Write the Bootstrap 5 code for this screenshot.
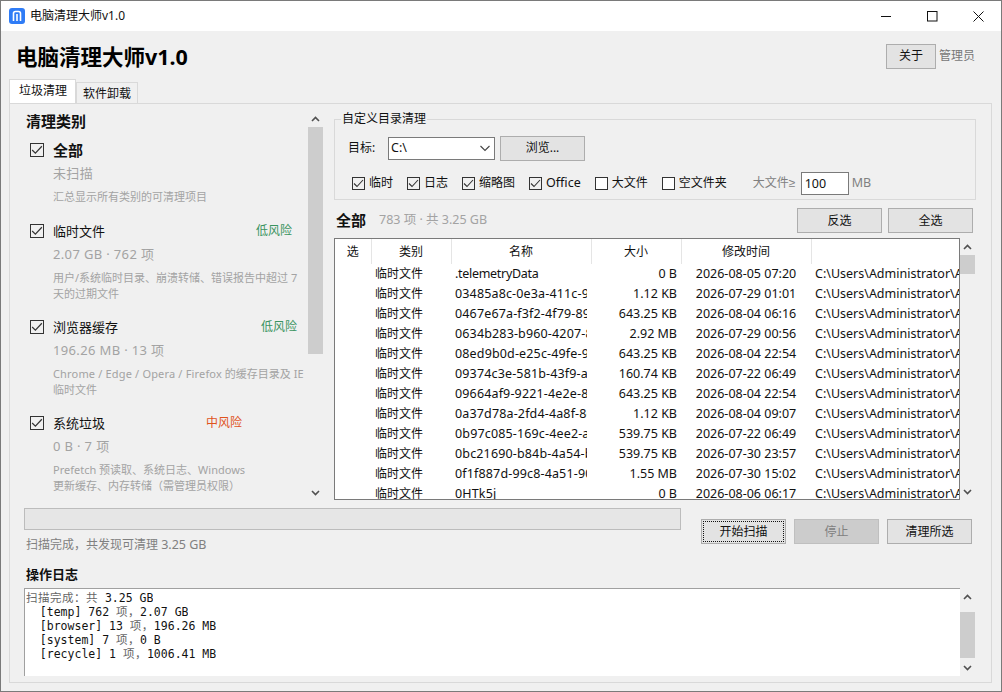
<!DOCTYPE html>
<html lang="zh-CN">
<head>
    <meta charset="UTF-8">
    <title>电脑清理大师v1.0</title>
    <link href="https://cdn.jsdelivr.net/npm/bootstrap@5.3.0/dist/css/bootstrap.min.css" rel="stylesheet">
    <style>
        html, body { margin: 0; height: 100%; overflow: hidden; background: #f0f0f0; }
        body, button, input, select, table { font-family: "Noto Sans", "Noto Sans CJK SC", sans-serif; font-size: 12px; color: #111; }

        .app-window { width: 1002px; height: 692px; border: 1px solid #7a7a7a; background: #f0f0f0; overflow: hidden; }
        .title-strip { height: 30px; background: #fff; padding-left: 8px; }
        .title-icon { margin-right: 5px; }
        .win-btn { width: 46px; height: 30px; }
        .head-strip { height: 49px; padding: 0 15px; }
        .app-heading { font-size: 21.5px; font-weight: 700; line-height: 1; margin: 2px 0 0; color: #000; }
        .admin-note { color: #777; margin: 0 11px 0 3px; line-height: 25px; }

        .win-btn-plain { border: 1px solid #adadad; border-radius: 0; background: #e3e3e3; color: #111; font-size: 12px; height: 25px; width: 85px; padding: 0; line-height: 1; }
        .win-btn-plain:hover { background: #e3e3e3; border-color: #adadad; color: #111; }
        .win-btn-about { width: 50px; margin-top: 1px; }
        .win-btn-focus { outline: 1px dotted #111; outline-offset: -3px; }
        .btn.win-btn-off, .btn.win-btn-off:disabled { background: #ccc; border-color: #bfbfbf; color: #808080; opacity: 1; }

        .tab-strip { padding-left: 8px; height: 23px; border: 0; }
        .tab-strip .nav-link { border: 1px solid #d9d9d9; border-bottom: 0; border-radius: 0; color: #111; font-size: 12px; height: 21px; margin-top: 2px; padding: 0 6px; line-height: 22px; background: #f0f0f0; margin-right: 0; }
        .tab-strip .nav-link.active { height: 24px; margin-top: -1px; background: #fff; color: #111; border-color: #d9d9d9; padding: 0 8px 0 9px; line-height: 22px; position: relative; z-index: 1; }
        .tab-body { margin-left: 8px; width: 983px; height: 580px; border: 1px solid #d9d9d9; }

        .top-zone { height: 397px; }
        .cat-panel { width: 314px; margin-top: 6px; height: 391px; }
        .cat-list { width: 298px; padding: 1px 0 0 16px; overflow: hidden; }
        .cat-title { font-size: 15px; font-weight: 700; line-height: 20px; color: #111; margin-bottom: 9px; }
        .cat-item { padding-left: 4px; margin-bottom: 15px; }
        .cat-item-first { margin-bottom: 16px; }
        .cat-head { height: 20px; line-height: 20px; font-size: 13px; }
        .cat-name { margin-left: 9px; }
        .cat-name-strong { font-weight: 700; font-size: 15px; }
        .cat-stat { color: #a3a3a3; font-size: 13px; line-height: 20px; margin: 3px 0 0 23px; letter-spacing: .35px; }
        .cat-desc { color: #a3a3a3; font-size: 11px; line-height: 16px; margin: 6px 0 0 23px; }
        .latin-wide { letter-spacing: .17px; }
        .risk-low { color: #3a9460; font-size: 12px; }
        .risk-mid { color: #e0531c; font-size: 12px; }
        .risk-a { margin-left: 151px; }
        .risk-b { margin-left: 143px; }
        .risk-c { margin-left: 101px; }

        .win-scroll { width: 15px; flex: none; background: #f0f0f0; }
        .scroll-arrow { height: 17px; display: flex; align-items: center; justify-content: center; flex: none; }
        .scroll-thumb { width: 15px; background: #cdcdcd; flex: none; }
        .scroll-gap { flex: 1 1 auto; }
        .thumb-cat { height: 227px; }
        .thumb-grid { height: 19px; }
        .thumb-log { height: 46px; margin-top: 7px; }

        .right-zone { width: 642px; margin-left: 10px; padding-top: 7px; }
        .dir-box { height: 89px; border: 1px solid #d9d9d9; padding: 0 13px; margin: 0; min-width: 0; }
        .dir-box legend { float: none; width: auto; font-size: 12px; line-height: 16px; margin: 0 0 0 -7px; padding: 0 1px; color: #111; }
        .dir-row { height: 26px; margin-top: 8px; }
        .field-label { width: 40px; }
        .dir-combo.form-select { width: 107px; height: 23px; border: 1px solid #7a7a7a; border-radius: 0; padding: 0 20px 0 2px; font-size: 12.5px; color: #111; background-image: url("data:image/svg+xml,%3csvg xmlns='http://www.w3.org/2000/svg' viewBox='0 0 12 10'%3e%3cpath fill='none' stroke='%23444' stroke-width='1.1' d='M1.5 3l4.5 4.5L10.5 3'/%3e%3c/svg%3e"); background-position: right 3px center; background-size: 12px 10px; min-height: 0; }
        .browse-btn { margin-left: 5px; }
        .check-row { margin-top: 10px; height: 24px; margin-left: 4px; }
        .pick { display: inline-flex; align-items: center; margin: 0 14px 0 0; min-height: 0; padding: 0; }
        .pick-last { margin-right: 0; }
        .pick .form-check-input { margin: 0 4px 0 0; float: none; }
        .form-check-input[type=checkbox] { width: 13px; height: 13px; border: 1px solid #333; border-radius: 0; background-color: #fff; flex: none; }
        .form-check-input[type=checkbox]:checked { background-color: transparent; border-color: #333; background-image: url("data:image/svg+xml,%3csvg xmlns='http://www.w3.org/2000/svg' viewBox='0 0 13 13'%3e%3cpath fill='none' stroke='%23333' stroke-width='1.1' d='M2 6.5l3 3 6-6.5'/%3e%3c/svg%3e"); background-size: 13px 13px; }
        .cat-item .form-check-input[type=checkbox] { width: 14px; height: 14px; background-size: 14px 14px; }
        .latin-size { font-size: 12.5px; }
        .big-label { color: #808080; margin-left: 26px; width: 48px; white-space: nowrap; }
        .big-label span { font-family: "Liberation Sans", sans-serif; }
        .big-size.form-control { width: 48px; height: 23px; border: 1px solid #7a7a7a; border-radius: 0; padding: 0 3px; font-size: 12.5px; min-height: 0; color: #111; }
        .unit-note { color: #808080; margin-left: 3px; font-size: 12.5px; }

        .grid-bar { height: 38px; padding: 3px 3px 0 2px; }
        .grid-title { font-size: 15px; font-weight: 700; color: #111; }
        .grid-note { color: #a3a3a3; margin-left: 13px; font-size: 12.5px; }
        .pair-gap { gap: 6px; }
        .grid-wrap { height: 262px; width: 641px; }
        .grid-box { width: 626px; border: 1px solid #7a7a7a; background: #fff; overflow: hidden; }
        .file-grid { table-layout: fixed; width: 624px; margin: 0; background: #fff; }
        .file-grid th, .file-grid td { padding: 0 4px; font-weight: 400; white-space: nowrap; overflow: hidden; height: 20px; line-height: 20px; font-size: 12.5px; color: #111; background: #fff; box-shadow: none; border: 0; }
        .file-grid th { height: 25px; line-height: 24px; font-size: 12px; text-align: center; border-right: 1px solid #e5e5e5; }
        .file-grid th:last-child { border-right: 0; }
        .file-grid td.cell-kind { font-size: 12px; }
        .cell-time { text-align: center; }
        .cell-clip { display: block; overflow: hidden; letter-spacing: .15px; }
        #fileRows tr:first-child .cell-clip { letter-spacing: -.3px; }

        .lower-zone { padding: 7px 0 0 14px; }
        .progress-side { width: 657px; }
        .scan-bar.progress { height: 22px; border: 1px solid #bcbcbc; border-radius: 0; background: #e6e6e6; }
        .scan-note { color: #808080; line-height: 20px; margin: 5px 0 0 2px; }
        .action-side { margin: 11px 0 0 20px; gap: 8px; }
        .log-title { font-size: 13px; font-weight: 700; line-height: 18px; margin: 10px 0 5px 2px; color: #111; }
        .log-wrap { height: 88px; width: 951px; }
        .log-box { width: 936px; height: 88px; background: #fff; border-left: 1px solid #a0a0a0; border-top: 1px solid #a0a0a0; padding: 2px 0 0 1px; font-family: "DejaVu Sans Mono", "Noto Sans CJK SC", monospace; font-size: 11.5px; color: #111; overflow: hidden; }
        .log-line { height: 14px; line-height: 14px; white-space: pre; }
        .log-line span { height: 14px; overflow: hidden; }
        .log-line .log-cjk { letter-spacing: .5px; color: #666; }
    </style>
</head>
<body>
<div class="app-window d-flex flex-column">

    <!-- title bar -->
    <div class="title-strip d-flex align-items-center">
        <svg width="16" height="16" viewBox="0 0 16 16" class="title-icon">
            <rect width="16" height="16" rx="3" fill="#2f7cf6"/>
            <path d="M4.5 13V5.5Q4.5 3.5 6.5 3.5H9.5Q11.5 3.5 11.5 5.5V13" fill="none" stroke="#fff" stroke-width="1.6"/>
            <path d="M8 6v7" stroke="#fff" stroke-width="1.6"/>
        </svg>
        <span>电脑清理大师v1.0</span>
        <div class="ms-auto d-flex">
            <div class="win-btn d-flex align-items-center justify-content-center">
                <svg width="11" height="11" viewBox="0 0 11 11"><path d="M0 5.5h10" stroke="#111" stroke-width="1"/></svg>
            </div>
            <div class="win-btn d-flex align-items-center justify-content-center">
                <svg width="11" height="11" viewBox="0 0 11 11"><rect x=".5" y=".5" width="9.5" height="9.5" fill="none" stroke="#111"/></svg>
            </div>
            <div class="win-btn d-flex align-items-center justify-content-center">
                <svg width="11" height="11" viewBox="0 0 11 11"><path d="M.5.5l10 10M10.5.5l-10 10" stroke="#111" stroke-width="1"/></svg>
            </div>
        </div>
    </div>

    <!-- heading -->
    <div class="head-strip d-flex align-items-center">
        <h1 class="app-heading">电脑清理大师v1.0</h1>
        <button class="btn win-btn-plain win-btn-about ms-auto" type="button">关于</button>
        <span class="admin-note">管理员</span>
    </div>

    <ul class="nav nav-tabs tab-strip">
        <li class="nav-item"><a class="nav-link active" href="#">垃圾清理</a></li>
        <li class="nav-item"><a class="nav-link" href="#">软件卸载</a></li>
    </ul>

    <div class="tab-body">
        <div class="top-zone d-flex">
            <!-- categories -->
            <div class="cat-panel d-flex">
                <div class="cat-list">
                    <div class="cat-title">清理类别</div>
                    <div class="cat-item cat-item-first">
                        <div class="cat-head d-flex align-items-center"><input class="form-check-input m-0" type="checkbox" checked><span class="cat-name cat-name-strong">全部</span></div>
                        <div class="cat-stat">未扫描</div>
                        <div class="cat-desc">汇总显示所有类别的可清理项目</div>
                    </div>
                    <div class="cat-item">
                        <div class="cat-head d-flex align-items-center"><input class="form-check-input m-0" type="checkbox" checked><span class="cat-name">临时文件</span><span class="risk-low risk-a">低风险</span></div>
                        <div class="cat-stat">2.07 GB · 762 项</div>
                        <div class="cat-desc">用户/系统临时目录、崩溃转储、错误报告中超过 7 天的过期文件</div>
                    </div>
                    <div class="cat-item">
                        <div class="cat-head d-flex align-items-center"><input class="form-check-input m-0" type="checkbox" checked><span class="cat-name">浏览器缓存</span><span class="risk-low risk-b">低风险</span></div>
                        <div class="cat-stat">196.26 MB · 13 项</div>
                        <div class="cat-desc"><span class="latin-wide">Chrome / Edge / Opera / Firefox</span> 的缓存目录及 IE 临时文件</div>
                    </div>
                    <div class="cat-item">
                        <div class="cat-head d-flex align-items-center"><input class="form-check-input m-0" type="checkbox" checked><span class="cat-name">系统垃圾</span><span class="risk-mid risk-c">中风险</span></div>
                        <div class="cat-stat">0 B · 7 项</div>
                        <div class="cat-desc">Prefetch 预读取、系统日志、Windows<br>更新缓存、内存转储（需管理员权限）</div>
                    </div>
                </div>
                <div class="win-scroll d-flex flex-column">
                    <div class="scroll-arrow"><svg width="9" height="6" viewBox="0 0 9 6"><path d="M1 5l3.5-3.5L8 5" fill="none" stroke="#505050" stroke-width="1.6"/></svg></div>
                    <div class="scroll-thumb thumb-cat"></div>
                    <div class="scroll-gap"></div>
                    <div class="scroll-arrow"><svg width="9" height="6" viewBox="0 0 9 6"><path d="M1 1l3.5 3.5L8 1" fill="none" stroke="#505050" stroke-width="1.6"/></svg></div>
                </div>
            </div>

            <!-- custom dir + results -->
            <div class="right-zone">
                <fieldset class="dir-box">
                    <legend>自定义目录清理</legend>
                    <div class="dir-row d-flex align-items-center">
                        <span class="field-label">目标:</span>
                        <select class="form-select dir-combo"><option>C:\</option></select>
                        <button class="btn win-btn-plain browse-btn" type="button">浏览...</button>
                    </div>
                    <div class="check-row d-flex align-items-center">
                        <label class="pick"><input class="form-check-input" type="checkbox" checked>临时</label>
                        <label class="pick"><input class="form-check-input" type="checkbox" checked>日志</label>
                        <label class="pick"><input class="form-check-input" type="checkbox" checked>缩略图</label>
                        <label class="pick latin-size"><input class="form-check-input" type="checkbox" checked>Office</label>
                        <label class="pick"><input class="form-check-input" type="checkbox">大文件</label>
                        <label class="pick pick-last"><input class="form-check-input" type="checkbox">空文件夹</label>
                        <span class="big-label">大文件<span>≥</span></span>
                        <input class="form-control big-size" type="text" value="100">
                        <span class="unit-note">MB</span>
                    </div>
                </fieldset>

                <div class="grid-bar d-flex align-items-center">
                    <span class="grid-title">全部</span>
                    <span class="grid-note">783 项 · 共 3.25 GB</span>
                    <div class="ms-auto d-flex pair-gap">
                        <button class="btn win-btn-plain" type="button">反选</button>
                        <button class="btn win-btn-plain" type="button">全选</button>
                    </div>
                </div>

                <div class="grid-wrap d-flex">
                    <div class="grid-box">
                        <table class="table table-borderless file-grid">
                            <colgroup><col style="width:36px"><col style="width:80px"><col style="width:140px"><col style="width:90px"><col style="width:130px"><col style="width:148px"></colgroup>
                            <thead><tr><th>选</th><th>类别</th><th>名称</th><th>大小</th><th>修改时间</th><th></th></tr></thead>
                            <tbody id="fileRows"></tbody>
                        </table>
                    </div>
                    <div class="win-scroll d-flex flex-column">
                        <div class="scroll-arrow"><svg width="9" height="6" viewBox="0 0 9 6"><path d="M1 5l3.5-3.5L8 5" fill="none" stroke="#505050" stroke-width="1.6"/></svg></div>
                        <div class="scroll-thumb thumb-grid"></div>
                        <div class="scroll-gap"></div>
                        <div class="scroll-arrow"><svg width="9" height="6" viewBox="0 0 9 6"><path d="M1 1l3.5 3.5L8 1" fill="none" stroke="#505050" stroke-width="1.6"/></svg></div>
                    </div>
                </div>
            </div>
        </div>

        <div class="lower-zone">
            <div class="d-flex">
                <div class="progress-side">
                    <div class="progress scan-bar"><div class="progress-bar bg-transparent" style="width:0%"></div></div>
                    <div class="scan-note">扫描完成，共发现可清理 <span class="latin-size">3.25 GB</span></div>
                </div>
                <div class="action-side d-flex align-items-start">
                    <button class="btn win-btn-plain win-btn-focus" type="button">开始扫描</button>
                    <button class="btn win-btn-plain win-btn-off" type="button" disabled>停止</button>
                    <button class="btn win-btn-plain" type="button">清理所选</button>
                </div>
            </div>
            <div class="log-title">操作日志</div>
            <div class="log-wrap d-flex">
                <div class="log-box">
                    <div class="log-line d-flex"><span class="log-cjk">扫描完成：共</span><span> 3.25 GB</span></div>
                    <div class="log-line d-flex"><span>  [temp] 762 </span><span class="log-cjk">项，</span><span>2.07 GB</span></div>
                    <div class="log-line d-flex"><span>  [browser] 13 </span><span class="log-cjk">项，</span><span>196.26 MB</span></div>
                    <div class="log-line d-flex"><span>  [system] 7 </span><span class="log-cjk">项，</span><span>0 B</span></div>
                    <div class="log-line d-flex"><span>  [recycle] 1 </span><span class="log-cjk">项，</span><span>1006.41 MB</span></div>
                </div>
                <div class="win-scroll d-flex flex-column">
                    <div class="scroll-arrow"><svg width="9" height="6" viewBox="0 0 9 6"><path d="M1 5l3.5-3.5L8 5" fill="none" stroke="#505050" stroke-width="1.6"/></svg></div>
                    <div class="scroll-thumb thumb-log"></div>
                    <div class="scroll-gap"></div>
                    <div class="scroll-arrow"><svg width="9" height="6" viewBox="0 0 9 6"><path d="M1 1l3.5 3.5L8 1" fill="none" stroke="#505050" stroke-width="1.6"/></svg></div>
                </div>
            </div>
        </div>
    </div>
</div>

<script src="https://cdn.jsdelivr.net/npm/bootstrap@5.3.0/dist/js/bootstrap.bundle.min.js"></script>
<script>
    // scan results shown in the grid
    const files = [
        ['.telemetryData', '0 B', '2026-08-05 07:20'],
        ['03485a8c-0e3a-411c-9b2e-7c', '1.12 KB', '2026-07-29 01:01'],
        ['0467e67a-f3f2-4f79-8911-2c', '643.25 KB', '2026-08-04 06:16'],
        ['0634b283-b960-4207-8a1d-55', '2.92 MB', '2026-07-29 00:56'],
        ['08ed9b0d-e25c-49fe-9c31-0a', '643.25 KB', '2026-08-04 22:54'],
        ['09374c3e-581b-43f9-a7d2-6e', '160.74 KB', '2026-07-22 06:49'],
        ['09664af9-9221-4e2e-8b40-31', '643.25 KB', '2026-08-04 22:54'],
        ['0a37d78a-2fd4-4a8f-8c77-19', '1.12 KB', '2026-08-04 09:07'],
        ['0b97c085-169c-4ee2-a5f0-42', '539.75 KB', '2026-07-22 06:49'],
        ['0bc21690-b84b-4a54-b1e6-88', '539.75 KB', '2026-07-30 23:57'],
        ['0f1f887d-99c8-4a51-90ad-73', '1.55 MB', '2026-07-30 15:02'],
        ['0HTk5j', '0 B', '2026-08-06 06:17']
    ];
    document.getElementById('fileRows').innerHTML = files.map(f =>
        '<tr><td></td><td class="cell-kind">临时文件</td><td><span class="cell-clip">' + f[0] + '</span></td><td class="text-end">' + f[1] +
        '</td><td class="cell-time">' + f[2] + '</td><td>C:\\Users\\Administrator\\AppData\\Local</td></tr>'
    ).join('');
</script>
</body>
</html>
